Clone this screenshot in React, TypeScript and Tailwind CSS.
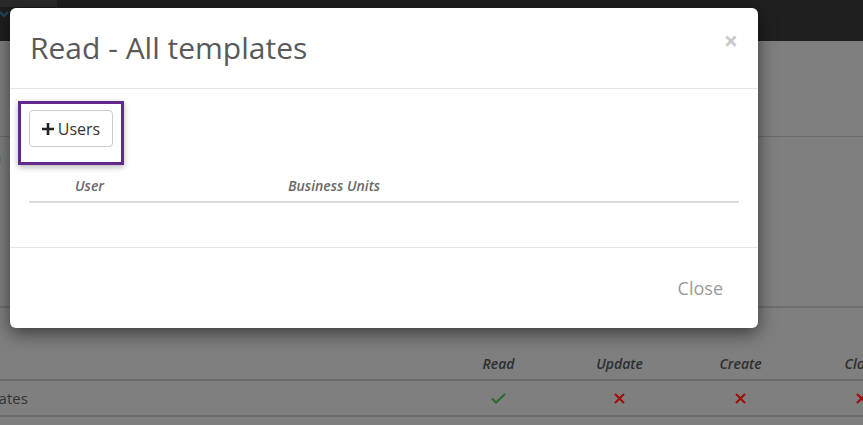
import React from "react";

const font = { fontFamily: "'Open Sans', 'Liberation Sans', sans-serif" };

function Check() {
  return (
    <svg width="15" height="11" viewBox="0 0 15 11" fill="none">
      <path d="M1 5.5 L5 9.5 L14 1" stroke="#2b6a2b" strokeWidth="2" />
    </svg>
  );
}

function Cross() {
  return (
    <svg width="11" height="11" viewBox="0 0 11 11" fill="none">
      <path d="M1 1 L10 10 M10 1 L1 10" stroke="#a30a0a" strokeWidth="2" />
    </svg>
  );
}

export default function App() {
  return (
    <div className="relative w-[863px] h-[425px] overflow-hidden bg-[#7f7f7f]" style={font}>
      {/* dimmed page behind the dialog */}
      <div className="flex flex-col">
        <div className="h-[41px] bg-[#1f1f1f] relative">
          <div className="h-[7px] w-[57px] bg-[#2a2a2a]" />
          <svg className="absolute left-0 top-[11px]" width="10" height="8" viewBox="0 0 10 8" fill="none">
            <path d="M0 1 L4 5 L8 1" stroke="#1b4a63" strokeWidth="2" />
          </svg>
        </div>
        <div className="h-[96px] border-b border-[#6d6d6d]" />
        <div className="h-[171px] border-b-2 border-[#6f6f6f] pt-[9px]">
          <div className="-ml-[38px] text-[16px] text-[#303030] leading-[22px]">Form</div>
        </div>
        <div className="h-[73px] border-b-2 border-[#6b6b6b] grid grid-cols-[438px_121px_121px_121px_121px] items-end pb-[5px]">
          <div />
          <div className="text-center italic font-semibold text-[14px] text-[#2e2e2e]">Read</div>
          <div className="text-center italic font-semibold text-[14px] text-[#2e2e2e]">Update</div>
          <div className="text-center italic font-semibold text-[14px] text-[#2e2e2e]">Create</div>
          <div className="text-center italic font-semibold text-[14px] text-[#2e2e2e]">Close</div>
        </div>
        <div className="h-[36px] border-b-2 border-[#6b6b6b] grid grid-cols-[438px_121px_121px_121px_121px] items-center">
          <div className="-ml-[42px] text-[15px] text-[#333]">templates</div>
          <div className="flex justify-center"><Check /></div>
          <div className="flex justify-center"><Cross /></div>
          <div className="flex justify-center"><Cross /></div>
          <div className="flex justify-center"><Cross /></div>
        </div>
      </div>

      {/* dialog */}
      <div className="absolute left-[10px] top-[8px] w-[748px] bg-white rounded-[6px] shadow-[0_5px_18px_rgba(0,0,0,0.55)]">
        <div className="h-[81px] border-b border-[#e5e5e5] flex items-start justify-between pl-[20px] pr-[20px]">
          <h4 className="mt-[20px] text-[30px] leading-[40px] text-[#595959] font-normal">Read - All templates</h4>
          <button className="mt-[20px] text-[25px] leading-[24px] font-bold text-[#c9c9c9]">×</button>
        </div>
        <div className="pl-[8px] pt-[12px] pb-[44px]">
          <div className="inline-flex border-[3px] border-[#62298c] pt-[6px] pl-[8px] pr-[8px] pb-[15px] shadow-[0_2px_6px_rgba(0,0,0,0.3)]">
            <button className="w-[84px] h-[37px] border border-[#cccccc] rounded-[4px] flex items-center justify-center gap-[4px] text-[16px] text-[#333]">
              <svg width="12" height="12" viewBox="0 0 12 12">
                <path d="M6 0 V12 M0 6 H12" stroke="#222" strokeWidth="2.6" />
              </svg>
              <span>Users</span>
            </button>
          </div>
          <div className="ml-[11px] mr-[19px] mt-[3px] border-b-2 border-[#dddddd] grid grid-cols-[46px_213px_1fr] pt-[8px] pb-[5px] text-[14px] leading-[20px] italic font-semibold text-[#6a6a6a]">
            <div />
            <div>User</div>
            <div>Business Units</div>
          </div>
        </div>
        <div className="h-[81px] border-t border-[#e5e5e5] flex items-center justify-end pr-[20px]">
          <button className="px-[15px] text-[18px] text-[#9a9a9a]">Close</button>
        </div>
      </div>
    </div>
  );
}
